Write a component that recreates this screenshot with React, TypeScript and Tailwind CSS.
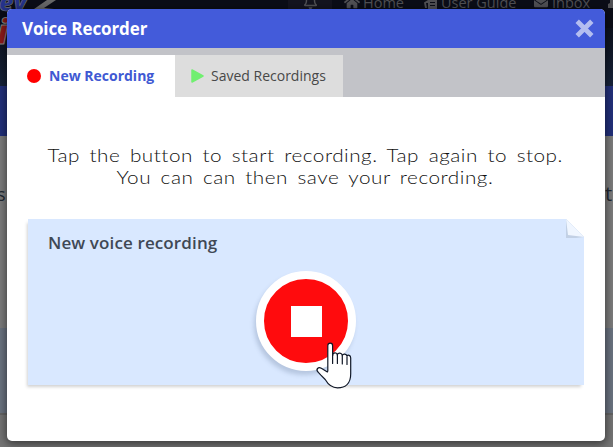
import React from "react";
import { FaHome, FaEnvelope, FaRegBell } from "react-icons/fa";

function Backdrop() {
  return (
    <div className="absolute inset-0 flex flex-col bg-[#6f6f70]">
      <div className="flex h-7 shrink-0 bg-[#0b0d17]" />
      <div className="h-[58px] shrink-0 bg-gradient-to-b from-[#0c111d] to-[#17233a]" />
      <div className="h-[50px] shrink-0 bg-[#22307a]" />
      <div className="h-[192px] shrink-0 bg-[#7c7c7c]" />
      <div className="h-[85px] shrink-0 bg-[#6a7380]" />
      <div className="grow border-t-2 border-[#646464] bg-[#747474]" />
      <svg className="absolute left-0 top-0" width="60" height="50" viewBox="0 0 60 50">
        <text x="-1" y="11" fontSize="25" fontWeight="900" fontStyle="italic" fontFamily="Open Sans" fill="#25338b" stroke="#777" strokeWidth=".6">ev</text>
        <path d="M47 0h9l-12 8 10 1H34Z" fill="#686868" />
        <text x="-3" y="44" fontSize="34" fontWeight="900" fontStyle="italic" fontFamily="Open Sans" fill="#8c1a19" stroke="#888" strokeWidth="1">i</text>
      </svg>
      <div className="absolute left-[288px] top-0 h-7 w-11 bg-[#14141f]" />
      <FaRegBell className="absolute left-[303px] top-[-6px] text-[#505054]" size={15} />
      <FaHome className="absolute left-[344px] top-[-6px] text-[#505054]" size={16} />
      <span className="absolute left-[363px] top-[-8px] text-[14.5px] leading-[22px] text-[#505054]">Home</span>
      <svg className="absolute left-[424px] top-0" width="14" height="9" viewBox="0 0 14 9">
        <path d="M0 2.5 4 0v3H2l1 5H1ZM4 0h9v9H4Z" fill="#505054" />
        <path d="M6 2.5h5M6 5.5h5" stroke="#0b0d17" />
      </svg>
      <span className="absolute left-[441px] top-[-8px] text-[14.5px] leading-[22px] text-[#505054]">User Guide</span>
      <FaEnvelope className="absolute left-[534px] top-[-5px] text-[#505054]" size={14} />
      <span className="absolute left-[552px] top-[-8px] text-[14.5px] leading-[22px] text-[#505054]">Inbox</span>
      <svg className="absolute left-[608px] top-0 text-[#505054]" width="5" height="8"><path d="M2 0h3v8H0V4l2-1Z" fill="currentColor" /></svg>
      <span className="absolute left-[-3px] top-[182px] text-[18px] leading-6 text-[#222831]">s</span>
      <span className="absolute left-[605px] top-[182px] text-[20px] leading-6 text-[#222831]">t</span>
    </div>
  );
}

function PointerHand() {
  return (
    <svg className="absolute left-[58.5px] top-[71px]" width="38" height="48" viewBox="0 0 38 48">
      <path
        d="M12.8 29.5V3.7c0-3.4 4.8-3.4 4.8 0v10.1c0-3.8 4.4-3.6 4.7-.9.7-2.5 4.7-2.3 5 .8.6-2.4 4.3-2.2 4.7.5.8-1.7 3.7-1.2 3.7 1.7v16c0 9-5 13.9-13.2 13.9-6.5 0-9.7-3.8-12.3-8.3L5.9 33.2 3.3 30.4c-3.1-3.2.1-5.8 3-4.1l6.5 4"
        fill="white" stroke="#111827" strokeWidth="1.2" strokeLinejoin="round"
      />
      <path d="M17.6 13v8.5M22.4 13v8.5M27.3 14v8M32 15v7.5" fill="none" stroke="#111827" strokeWidth="1.2" strokeLinecap="round" />
    </svg>
  );
}

export default function App() {
  return (
    <div className="relative h-[447px] w-[613px] overflow-hidden pl-[7px] pt-[9px] font-['Open_Sans',sans-serif]">
      <Backdrop />
      <main className="relative flex h-[432px] w-[598px] flex-col overflow-hidden rounded-[5px] bg-white shadow-[0_2px_8px_1px_rgba(0,0,0,.5)]">
        <header className="flex h-[39px] shrink-0 items-center justify-between bg-[#435bda] pl-[15px] pr-[11px]">
          <h1 className="text-[17px] font-bold leading-none tracking-[-0.1px] text-white">Voice Recorder</h1>
          <svg width="19" height="19" viewBox="0 0 19 19" aria-label="Close">
            <path d="m2.2 2.2 14.6 14.6m0-14.6L2.2 16.8" stroke="#b4bef0" strokeWidth="4.8" />
          </svg>
        </header>
        <nav className="flex h-[49px] shrink-0 bg-[#c2c3c8] pt-[7px] text-[14px]">
          <button className="flex w-[168px] items-center bg-white pb-px pl-5 font-bold text-[#4059d3]">
            <span className="mr-2 size-[14px] rounded-full bg-[#ff0000]" />New Recording
          </button>
          <button className="flex w-[168px] items-center bg-[#ddd] pb-px pl-4 text-[#484848]">
            <svg className="mr-[7px]" width="13" height="14" viewBox="0 0 13 14"><path d="M1 1 12 7 1 13Z" fill="#70ef70" stroke="#70ef70" strokeWidth="1.5" strokeLinejoin="round" /></svg>
            Saved Recordings
          </button>
        </nav>
        <section className="flex grow flex-col px-[21px] pt-[47px]">
          <div className="mr-0.5 flex h-[75px] shrink-0 flex-col items-center font-['Lato','Open_Sans',sans-serif] text-[18px] font-light leading-[22px] text-[#111]">
            <p className="scale-x-[1.15] whitespace-nowrap tracking-[0.45px] [word-spacing:3px]">Tap the button to start recording. Tap again to stop.</p>
            <p className="scale-x-[1.15] whitespace-nowrap tracking-[0.45px] [word-spacing:3px]">You can can then save your recording.</p>
          </div>
          <div className="relative h-[166px] shrink-0 bg-[#d9e8ff] pl-5 pt-3 shadow-[-2px_3px_3px_-1px_rgba(0,0,0,.18)]">
            <svg className="absolute right-0 top-0" width="18" height="19" viewBox="0 0 18 19">
              <path d="M0 0h18v18Z" fill="white" /><path d="M0 0v19h10l8-1Z" fill="#c2d0e5" /><path d="m0 0 2 16 16 2Z" fill="#f0f6ff" />
            </svg>
            <h2 className="text-[17px] font-semibold leading-[24px] tracking-[0.12px] text-[#404855]">New voice recording</h2>
            <button className="absolute left-[228px] top-[52px] flex size-[100px] items-center justify-center rounded-full border-8 border-white bg-[#ff0b0d] shadow-[-2px_4px_4px_rgba(80,100,130,.25)]">
              <span className="size-[31px] bg-white" />
            </button>
            <div className="absolute left-[228px] top-[52px]"><PointerHand /></div>
          </div>
        </section>
      </main>
    </div>
  );
}
